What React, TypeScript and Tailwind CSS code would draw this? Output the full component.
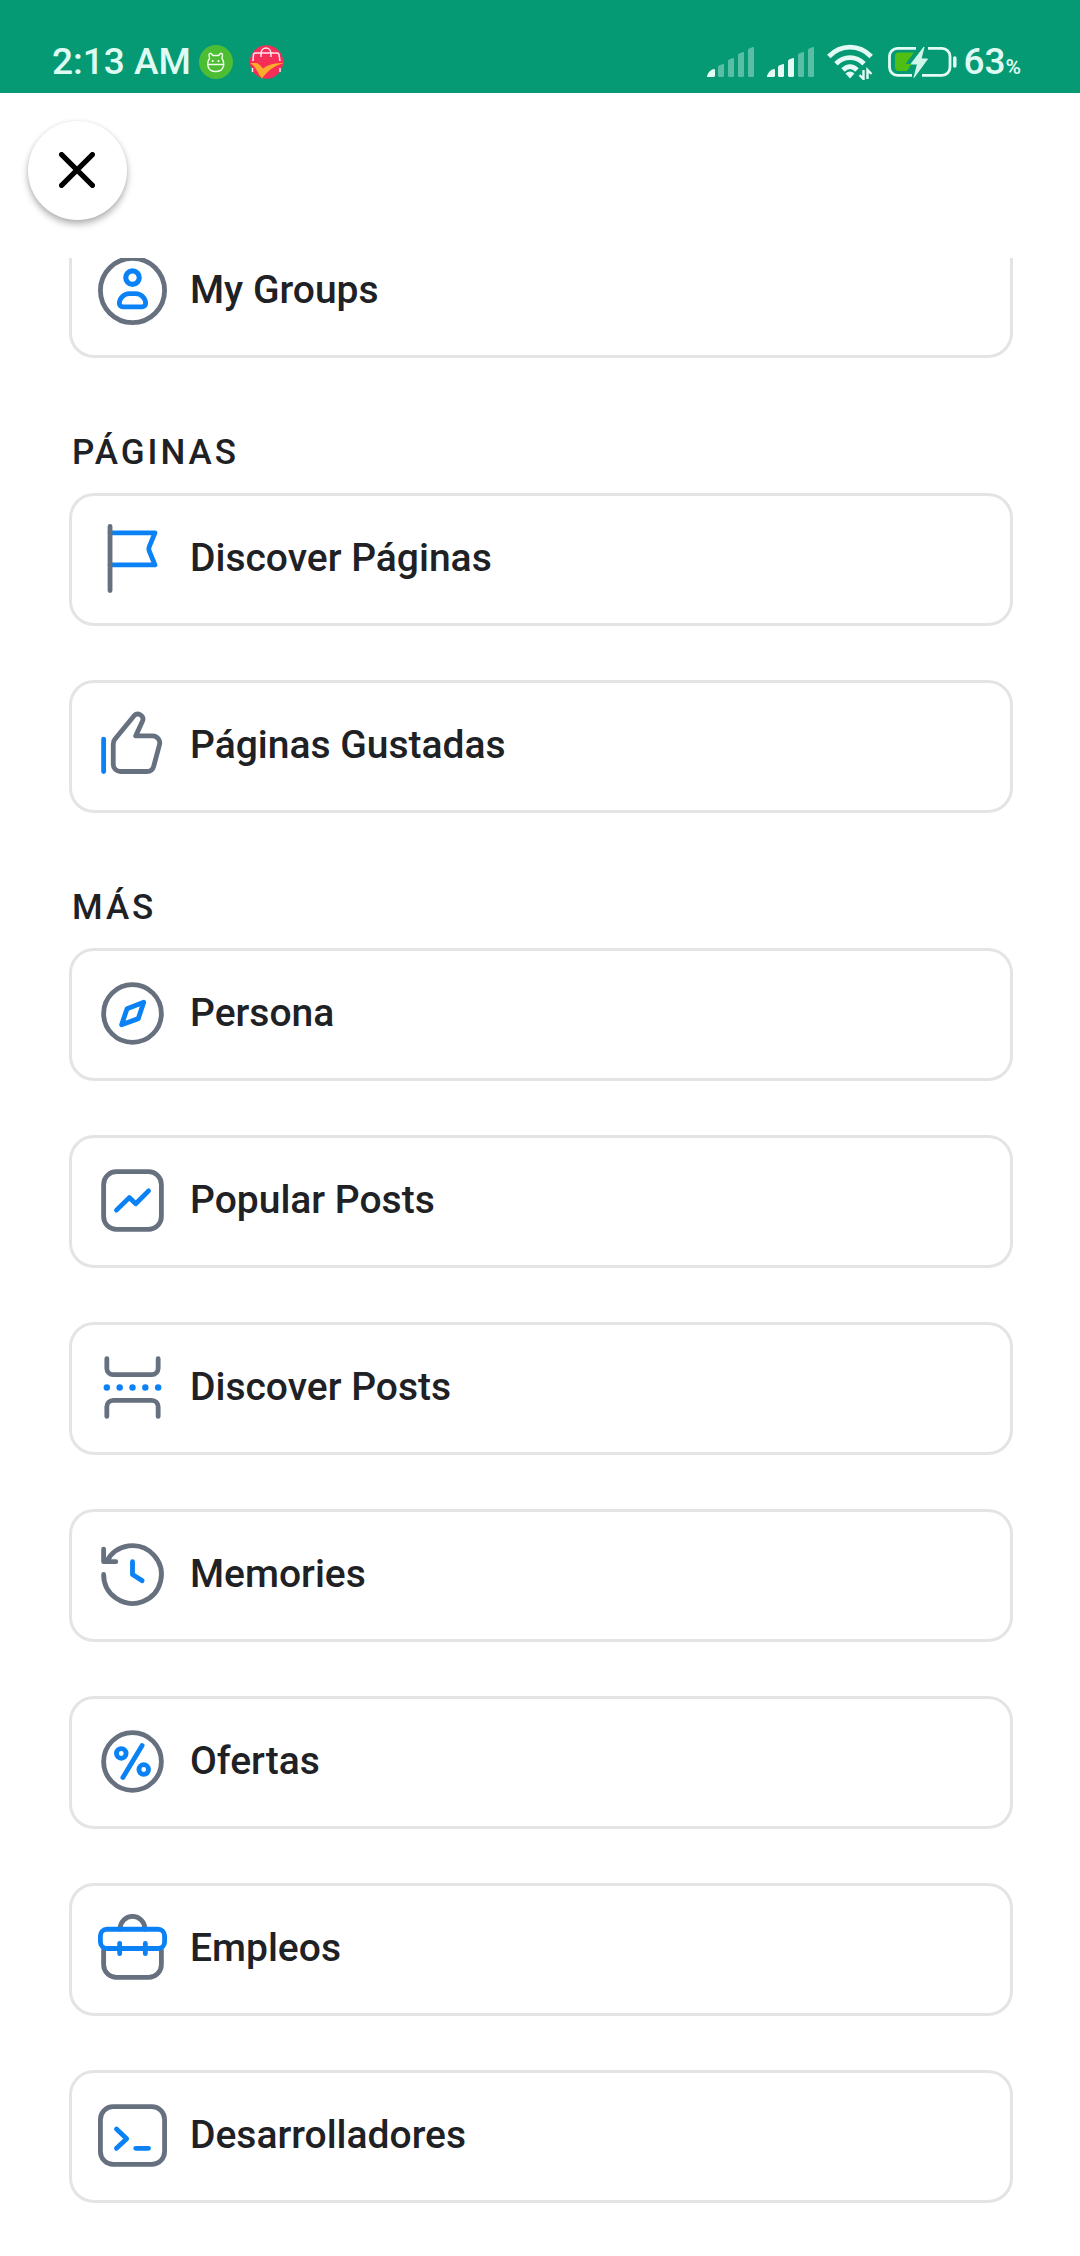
import type { ReactNode } from "react";

const GRAY = "#66707f";
const BLUE = "#0a82f5";

function Icon({ children }: { children: ReactNode }) {
  return (
    <svg
      viewBox="0 0 24 24"
      className="size-[77px] shrink-0"
      fill="none"
      strokeWidth="1.5"
      strokeLinecap="round"
      strokeLinejoin="round"
      aria-hidden="true"
    >
      {children}
    </svg>
  );
}

const GroupsIcon = () => (
  <Icon>
    <circle cx="12" cy="12" r="10" stroke={GRAY} />
    <circle cx="12" cy="8" r="2.1" stroke={BLUE} strokeWidth="1.6" />
    <path
      d="M11 13h2a3.2 3.2 0 0 1 3.1 3 1.1 1.1 0 0 1-1.1 1.1H9A1.1 1.1 0 0 1 7.9 16 3.2 3.2 0 0 1 11 13Z"
      stroke={BLUE}
    />
  </Icon>
);

const FlagIcon = () => (
  <Icon>
    <path d="M5 4h14l-1.8 4.400a1.600 1.600 0 0 0 0 1.200L19 14H5" stroke={BLUE} />
    <path d="M5 2v20" stroke={GRAY} />
  </Icon>
);

const LikeIcon = () => (
  <Icon>
    <path
      d="M6 11.500c0-.6.25-1.200.7-1.700l5.800-7.100a1.600 1.600 0 0 1 2.700 1.500L13 9h5.300a2.200 2.200 0 0 1 2.100 2.800l-1.800 6.700a2.200 2.200 0 0 1-2.100 1.600H8.200A2.200 2.200 0 0 1 6 17.900Z"
      stroke={GRAY}
    />
    <path d="M3 10v10.100" stroke={BLUE} />
  </Icon>
);

const CompassIcon = () => (
  <Icon>
    <circle cx="12" cy="12" r="9" stroke={GRAY} />
    <path d="m15.500 8.500-1.700 5.100-5.200 1.900 1.700-5Z" stroke={BLUE} />
  </Icon>
);

const ChartIcon = () => (
  <Icon>
    <rect x="3" y="3" width="18" height="18" rx="4" stroke={GRAY} />
    <path d="m7 15 4-3.900 2 1.900 4-4" stroke={BLUE} />
  </Icon>
);

const SplitIcon = () => (
  <Icon>
    <path
      d="M4 3v3a2 2 0 0 0 2 2h12a2 2 0 0 0 2-2V3M4 21v-3a2 2 0 0 1 2-2h12a2 2 0 0 1 2 2v3"
      stroke={GRAY}
    />
    {[4, 8, 12, 16, 20].map((x) => (
      <circle key={x} cx={x} cy="12" r="1" fill={BLUE} />
    ))}
  </Icon>
);

const HistoryIcon = () => (
  <Icon>
    <path d="M3 12a9 9 0 1 0 .94-4M3 4.100V8h3.800" stroke={GRAY} />
    <path d="M12 8v4l3 1.900" stroke={BLUE} />
  </Icon>
);

const PercentIcon = () => (
  <Icon>
    <circle cx="12" cy="12" r="9" stroke={GRAY} />
    <circle cx="8.5" cy="9.5" r="1.5" stroke={BLUE} />
    <circle cx="15.5" cy="14.5" r="1.5" stroke={BLUE} />
    <path d="M15 7 9 17" stroke={BLUE} />
  </Icon>
);

const BriefcaseIcon = () => (
  <Icon>
    <path d="M8.100 6a3.900 4 0 0 1 7.800 0M3 12.500V17a4 4 0 0 0 4 4h10a4 4 0 0 0 4-4v-4.500" stroke={GRAY} />
    <rect x="2" y="6" width="20" height="6" rx="2" stroke={BLUE} />
    <path d="M8 10.400v3.200M16 10.400v3.200" stroke={BLUE} />
  </Icon>
);

const TerminalIcon = () => (
  <Icon>
    <rect x="2" y="3" width="20" height="18" rx="4" stroke={GRAY} />
    <path d="m7 10 3.200 3L7 16M13 16h4" stroke={BLUE} />
  </Icon>
);

function Card({ icon, label }: { icon: ReactNode; label: string }) {
  return (
    <li>
      <a
        href="#"
        className="flex items-center gap-[19px] rounded-[25px] border-3 border-[#e4e4e4] bg-white px-[22px] pt-[24px] pb-[26px] text-[39px] leading-[46px] font-medium text-[#202124]"
      >
        {icon}
        <span className="pb-[2px]">{label}</span>
      </a>
    </li>
  );
}

function Section({ title, children }: { title: string; children: ReactNode }) {
  return (
    <section className="pt-[74px]">
      <h2 className="px-[3px] pb-[20px] text-[35px] leading-[41px] font-medium tracking-[3px] text-[#202124]">
        {title}
      </h2>
      <ul className="flex flex-col gap-[54px]">{children}</ul>
    </section>
  );
}

function Signal({ level }: { level: number }) {
  const bars = [
    "M.5 30a.7.7 0 0 1-.5-1c1-3.500 3.500-6 6.500-7q1.500-.3 1.500 1.200V29l-1 1z",
    "M11 20q0-1 1-1.500l4-1.500q1-.3 1 .8V29l-1 1h-4l-1-1z",
    "M21 14q0-1 1-1.500l4-1.500q1-.3 1 .8V29l-1 1h-4l-1-1z",
    "M31 8q0-1 1-1.500l4-1.500q1-.3 1 .8V29l-1 1h-4l-1-1z",
    "M41 3q0-1 1-1.500l4-1.500q1-.3 1 .8V29l-1 1h-4l-1-1z",
  ];
  return (
    <svg viewBox="0 0 47 30" className="h-[30px] w-[47px]" fill="#e3fbf4" aria-hidden="true">
      {bars.map((d, i) => (
        <path key={d} d={d} opacity={i < level ? 1 : 0.38} />
      ))}
    </svg>
  );
}

function StatusBar() {
  return (
    <header className="flex h-[93px] items-end justify-between bg-[#059a74] pr-[59px] pb-[9px] pl-[52px] text-[#dffaf2]">
      <div className="flex items-center">
        <span className="text-[37px] leading-[44px] font-medium">2:13 AM</span>
        <svg viewBox="0 0 34 34" className="ml-[8px] size-[34px]" fill="none" aria-hidden="true">
          <circle cx="17" cy="17" r="17" fill="#4dbd33" />
          <path
            d="M10.500 13.500 10 10q.2-2 2-1.500l2 2h5.500l2-2q1.800-.5 2 1.500l-.5 3.500c3 4.500 2.500 13-6.300 13S7.500 18 10.500 13.500zM8.500 19.500h16.500"
            stroke="#effde9"
            strokeWidth="1.400"
          />
          <circle cx="13.700" cy="16" r="1.100" fill="#fff" />
          <circle cx="19.500" cy="16" r="1.100" fill="#fff" />
        </svg>
        <svg viewBox="0 0 36 34" className="ml-[16px] h-[34px] w-[36px]" fill="none" aria-hidden="true">
          <circle cx="17.500" cy="17" r="16.700" fill="#f62d57" />
          <path
            d="M4 16 4.500 9.500Q4.800 8 6.500 8h21.500q1.700 0 2 1.500L31 16M12 12V9c0-8 10-8 10 0v3M3.500 23v4M31 23v4"
            stroke="#ffe9ee"
            strokeWidth="1.500"
          />
          <path d="M1 18h7q3 1.500 6 5.500C20 19 27 18 35 18 26 20 19 25.500 13 33.500 9.500 30 7 21 1 18z" fill="#fdab2c" />
        </svg>
      </div>
      <div className="flex items-center">
        <div className="flex gap-[13px]">
          <Signal level={1} />
          <Signal level={3} />
        </div>
        <svg viewBox="0 0 46 36" className="ml-[13px] h-[36px] w-[46px]" fill="none" aria-hidden="true">
          <path d="M1.800 12.500c12-12.500 30.400-12.500 42.400 0M9 19.800c8-8.200 20-8.200 28 0M16 26c4.500-4.500 9.500-4.500 14 0" stroke="#e3fbf4" strokeWidth="4.800" />
          <path d="M18.500 29.500q4.500-4 9 0L23 34.500z" fill="#e3fbf4" />
          <path d="M36.500 26v9l-4-4M40.500 35v-9l4 4" stroke="#e3fbf4" strokeWidth="2.400" />
        </svg>
        <svg viewBox="0 0 70 32" className="ml-[15px] h-[32px] w-[70px]" fill="none" aria-hidden="true">
          <path d="M28 2.300H9.500a8 8 0 0 0-8 8v11a8 8 0 0 0 8 8H24M40 2.300h14a8 8 0 0 1 8 8v11a8 8 0 0 1-8 8H34" stroke="#e3fbf4" strokeWidth="2.800" />
          <path d="M11 6.500h15L17.500 18h6L19 25H11a4 4 0 0 1-4-4V10.500a4 4 0 0 1 4-4z" fill="#4fc013" />
          <path d="M36 1 23 18h6.500l-3.500 13.500L39.500 13H33z" fill="#d0f6e9" stroke="#d0f6e9" />
          <path d="M66.800 12v8" stroke="#e3fbf4" strokeWidth="3.500" strokeLinecap="round" />
        </svg>
        <span className="ml-[5px] flex items-baseline font-medium">
          <span className="text-[37px] leading-[44px]">63</span>
          <span className="text-[21px] font-semibold">%</span>
        </span>
      </div>
    </header>
  );
}

export default function App() {
  return (
    <div className="min-h-screen bg-white font-['Roboto',sans-serif]">
      <StatusBar />
      <div className="px-[28px] pt-[28px] pb-[38px]">
        <button
          type="button"
          aria-label="Close"
          className="flex size-[99px] items-center justify-center rounded-full bg-white shadow-[0_4px_7px_rgba(0,0,0,0.3),0_0_4px_rgba(0,0,0,0.06)]"
        >
          <svg viewBox="0 0 35 35" className="size-[37px] pr-[1px] pb-[1px]" stroke="#000" strokeWidth="5" strokeLinecap="round" aria-hidden="true">
            <path d="m2.500 2.500 30 30M32.500 2.500l-30 30" />
          </svg>
        </button>
      </div>
      <main className="overflow-hidden pr-[67px] pb-[53px] pl-[69px]">
        <ul className="-mt-[33px]">
          <Card icon={<GroupsIcon />} label="My Groups" />
        </ul>
        <Section title="PÁGINAS">
          <Card icon={<FlagIcon />} label="Discover Páginas" />
          <Card icon={<LikeIcon />} label="Páginas Gustadas" />
        </Section>
        <Section title="MÁS">
          <Card icon={<CompassIcon />} label="Persona" />
          <Card icon={<ChartIcon />} label="Popular Posts" />
          <Card icon={<SplitIcon />} label="Discover Posts" />
          <Card icon={<HistoryIcon />} label="Memories" />
          <Card icon={<PercentIcon />} label="Ofertas" />
          <Card icon={<BriefcaseIcon />} label="Empleos" />
          <Card icon={<TerminalIcon />} label="Desarrolladores" />
        </Section>
      </main>
    </div>
  );
}
